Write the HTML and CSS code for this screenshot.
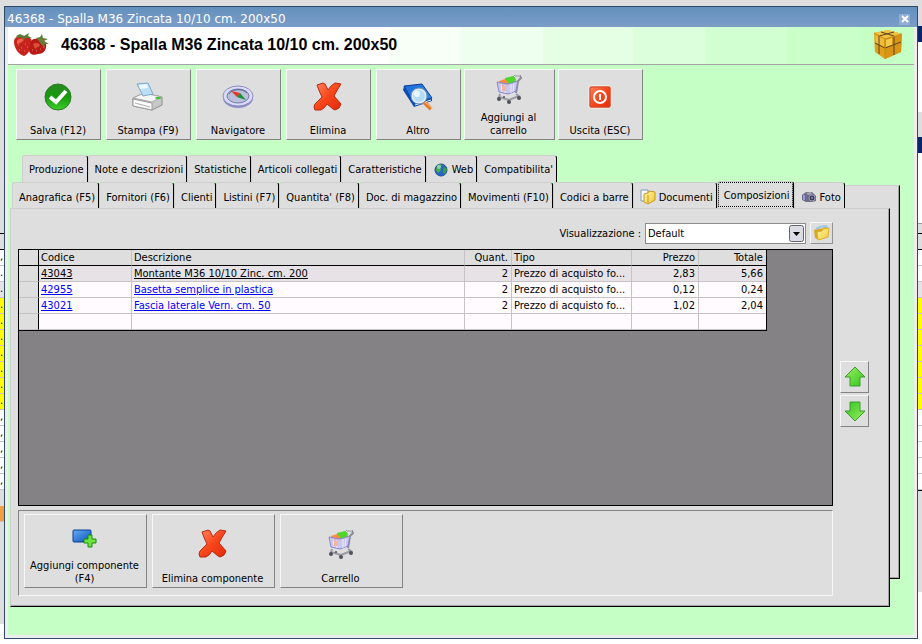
FILE: index.html
```html
<!DOCTYPE html>
<html lang="it">
<head>
    <meta charset="UTF-8">
    <meta name="viewport" content="width=device-width, initial-scale=1.0">
    <title>46368 - Spalla M36 Zincata 10/10 cm. 200x50</title>
    <link rel="stylesheet" href="styles.css">
</head>
<body>
    <!-- shared icons -->
    <svg class="sprite" aria-hidden="true">
        <defs>
            <linearGradient id="gGreen" x1="0" y1="0" x2="0" y2="1"><stop offset="0" stop-color="#2a8a22"/><stop offset="0.5" stop-color="#159a0c"/><stop offset="1" stop-color="#3fce2c"/></linearGradient>
            <linearGradient id="gRed" x1="0" y1="0" x2="1" y2="1"><stop offset="0" stop-color="#ff8a62"/><stop offset="0.5" stop-color="#f8461c"/><stop offset="1" stop-color="#e02a0c"/></linearGradient>
            <linearGradient id="gBlue" x1="0" y1="0" x2="1" y2="1"><stop offset="0" stop-color="#63aef5"/><stop offset="1" stop-color="#0a50b8"/></linearGradient>
            <linearGradient id="gBook" x1="0" y1="0" x2="1" y2="1"><stop offset="0" stop-color="#1c6cd8"/><stop offset="1" stop-color="#2c8cf0"/></linearGradient>
            <linearGradient id="gArrow" x1="0" y1="0" x2="1" y2="1"><stop offset="0" stop-color="#9cf060"/><stop offset="1" stop-color="#2fc41e"/></linearGradient>
            <linearGradient id="gFolder" x1="0" y1="0" x2="1" y2="1"><stop offset="0" stop-color="#fff6a0"/><stop offset="1" stop-color="#f0c83c"/></linearGradient>
        </defs>
        <symbol id="cross" viewBox="0 0 30 30">
            <path d="M4 3 10 1 12 2 15 8Q18 3 22 1L28 2Q24 8 21 14L28 22Q27 27 22 28L20 27 14 22Q12 26 8 28L2 28Q0 25 2 22L9 15Q6 9 4 3Z" fill="url(#gRed)" stroke="#b82810" stroke-linejoin="round"/>
        </symbol>
        <symbol id="cart" viewBox="0 0 26 30">
            <path d="M17 4 19 2H24L25 4 22 7 20 19" fill="none" stroke="#8c8c98" stroke-width="2"/>
            <path d="M17 4 19 2H24" fill="none" stroke="#e8e8ee" stroke-width="1"/>
            <path d="M9 4 17 2 20 5 19 10H9Z" fill="#50d62a"/>
            <path d="M3 7 9 5 12 8 11 12H4Z" fill="#ff8a42"/>
            <path d="M1 8 12 10 22 7 20 17 12 20 3 18Z" fill="#c4c0f0" fill-opacity="0.800" stroke="#8a86cc"/>
            <path d="M5 10 6 18M9 11V19M15 10V19M18 9 17 18" stroke="#eceafc" fill="none"/>
            <path d="M6 12H10V17H6Z" fill="#f4b4a0"/>
            <path d="M4 20 3 23 13 26 23 22 20 20" fill="none" stroke="#9a9aa4" stroke-width="2"/>
            <circle cx="3" cy="25" r="2" fill="#505058"/><circle cx="13" cy="28" r="2" fill="#505058"/><circle cx="23" cy="24" r="2" fill="#505058"/><circle cx="8" cy="23" r="1" fill="#505058"/>
        </symbol>
        <symbol id="arrow" viewBox="0 0 22 22">
            <path d="M11 1 21 11H16V20H6V11H1Z" fill="url(#gArrow)" stroke="#3a9c30" stroke-linejoin="round"/>
        </symbol>
        <symbol id="folder" viewBox="0 0 17 16">
            <path d="M1 5 6 3 8 4 13 1 15 2V12L6 15 2 13Z" fill="#d8a820"/>
            <path d="M3 4 7 2 13 1 14 3" fill="none" stroke="#9cc8e8" stroke-width="2"/>
            <path d="M4 7 9 6 10 4 16 3 15 12 5 15Z" fill="url(#gFolder)" stroke="#dcb030"/>
        </symbol>
    </svg>

    <aside class="behind behind-left" aria-hidden="true">
        <div class="b-panel"></div>
        <div class="b-head"></div>
        <div class="b-row">,</div>
        <div class="b-row">.</div>
        <div class="b-row current">.</div>
        <div class="b-row yellow">.</div>
        <div class="b-row yellow">.</div>
        <div class="b-row yellow">.</div>
        <div class="b-row yellow">.</div>
        <div class="b-row yellow">.</div>
        <div class="b-row yellow">.</div>
        <div class="b-row yellow">.</div>
        <div class="b-row">,</div>
        <div class="b-row">,</div>
        <div class="b-row">,</div>
        <div class="b-row">,</div>
        <div class="b-row">,</div>
        <div class="b-gap"></div>
        <div class="b-row orange"></div>
        <div class="b-foot"></div>
    </aside>

    <main class="window">
        <header class="titlebar">
            <span>46368 - Spalla M36 Zincata 10/10 cm. 200x50</span>
            <button class="close" type="button" aria-label="Chiudi">
                <svg width="8" height="8" viewBox="0 0 8 8"><path d="M1 1 7 7M7 1 1 7" stroke="#fff" stroke-width="2"/></svg>
            </button>
        </header>

        <div class="client">
            <div class="banner">
                <svg class="berries" width="38" height="26" viewBox="0 0 38 26">
                    <path d="M2 10C2 4 8 3 13 4 19 4 21 9 19 14 18 19 15 23 12 24 7 23 2 16 2 10Z" fill="#c8231c"/>
                    <path d="M19 9C23 5 32 6 34 12 35 17 32 22 26 22 21 24 17 22 17 18Z" fill="#b81c18"/>
                    <path d="M5 9C7 6 11 6 12 8 10 10 7 12 5 12Z" fill="#f0604c"/>
                    <path d="M21 12C24 10 27 11 28 13L23 17Z" fill="#e04c3a"/>
                    <path d="M4 4 8 2 12 4 17 1 16 4 20 6 14 6 11 8 10 5 6 6Z" fill="#5c7c34"/>
                    <path d="M24 6 28 5 30 2 31 6 36 7 32 9 37 12 32 12 33 16 29 12 27 9Z" fill="#66803a"/>
                    <path d="M6 13h1M9 16h1M13 12h1M12 19h1M15 15h1M7 18h1M20 18h1M24 19h1M28 17h1M26 14h1M31 15h1" stroke="#e87c4c"/>
                </svg>
                <h1>46368 - Spalla M36 Zincata 10/10 cm. 200x50</h1>
                <svg class="box" width="32" height="32" viewBox="0 0 32 32">
                    <path d="M2 4 16 1 30 5 29 23 13 30 3 23Z" fill="#e0a01c"/>
                    <path d="M2 4 16 1 30 5 13 10Z" fill="#f2c244"/>
                    <path d="M13 10 30 5 29 23 13 30Z" fill="#d89414"/>
                    <path d="M3 6 12 10V18L4 14Z" fill="#f0bc3c"/>
                    <path d="M14 11 20 9V16L14 18Z" fill="#f4c848"/>
                    <path d="M9 3 22 7V26M22 3 7 7V25M3 14 13 19 29 13" fill="none" stroke="#5c4420" stroke-width="1"/>
                    <path d="M13 10V30M2 4 13 10 30 5" fill="none" stroke="#c48c1c"/>
                </svg>
            </div>

            <div class="toolbar">
                <button class="big" type="button">
                    <svg width="30" height="30" viewBox="0 0 30 30"><circle cx="15" cy="15" r="13" fill="url(#gGreen)" stroke="#2c7c24"/><path d="M7 15 13 20 23 9" fill="none" stroke="#fff" stroke-width="4"/></svg>
                    <span>Salva (F12)</span>
                </button>
                <button class="big" type="button">
                    <svg width="32" height="30" viewBox="0 0 32 30">
                        <path d="M1 16 12 11 30 15V23L20 28 1 24Z" fill="#c8c8c8" stroke="#8c8c8c"/>
                        <path d="M1 16 12 11 30 15 20 20Z" fill="#f6f6f6" stroke="#a8a8a8"/>
                        <path d="M1 17 20 21V28L1 24Z" fill="#fafafa" stroke="#9c9c9c"/>
                        <path d="M5 2 16 1 21 12 11 14Z" fill="#bcdff8" stroke="#7ca8cc"/>
                        <path d="M7 3 15 2 16 6 8 7Z" fill="#eef8ff"/>
                        <ellipse cx="26" cy="16" rx="3" ry="1" fill="#2cc41c"/>
                        <path d="M3 21 18 25" stroke="#b0b0b0"/>
                    </svg>
                    <span>Stampa (F9)</span>
                </button>
                <button class="big" type="button">
                    <svg width="32" height="30" viewBox="0 0 32 30">
                        <ellipse cx="16" cy="16" rx="15" ry="10" fill="#8c8cc4"/>
                        <ellipse cx="16" cy="14" rx="15" ry="10" fill="#dcdcf8" stroke="#8c8cc4"/>
                        <ellipse cx="16" cy="14" rx="11" ry="7" fill="#b8c0dc" stroke="#7478ac"/>
                        <path d="M7 12C10 7 20 6 25 11" stroke="#5c6090" fill="none"/>
                        <path d="M9 9 18 11 15 15Z" fill="#e83420"/>
                        <path d="M18 11 24 18 15 15Z" fill="#189038"/>
                    </svg>
                    <span>Navigatore</span>
                </button>
                <button class="big" type="button">
                    <svg width="30" height="30"><use href="#cross"/></svg>
                    <span>Elimina</span>
                </button>
                <button class="big" type="button">
                    <svg width="32" height="30" viewBox="0 0 32 30">
                        <path d="M2 4 20 2 30 16 12 21Z" fill="url(#gBook)" stroke="#0c3c94"/>
                        <path d="M2 4 12 21 30 16V19L12 25 1 8Z" fill="#0c4cb0"/>
                        <path d="M13 23 29 18" stroke="#e8f0fc"/>
                        <path d="M22 20 29 27" stroke="#e87c28" stroke-width="4"/>
                        <path d="M22 19 30 26" stroke="#fcc48c" stroke-width="1"/>
                        <circle cx="17" cy="14" r="7" fill="#b4dcfa" stroke="#e4ecf4" stroke-width="2"/>
                        <circle cx="17" cy="14" r="8" fill="none" stroke="#6890b8"/>
                        <circle cx="15" cy="12" r="3" fill="#e8f6ff"/>
                    </svg>
                    <span>Altro</span>
                </button>
                <button class="big wide" type="button">
                    <svg width="26" height="30"><use href="#cart"/></svg>
                    <span>Aggiungi al carrello</span>
                </button>
                <button class="big" type="button">
                    <svg width="30" height="30" viewBox="0 0 30 30">
                        <rect x="4" y="4" width="22" height="22" rx="2" fill="url(#gRed)" stroke="#fff0ea"/>
                        <rect x="5" y="5" width="20" height="20" rx="1" fill="none" stroke="#c84828"/>
                        <circle cx="15" cy="15" r="6" fill="none" stroke="#fff" stroke-width="2"/>
                        <path d="M15 12V18" stroke="#fff" stroke-width="2"/>
                    </svg>
                    <span>Uscita (ESC)</span>
                </button>
            </div>

            <nav class="tabs tabs-back">
                <a class="tab" href="#">Produzione</a>
                <a class="tab" href="#">Note e descrizioni</a>
                <a class="tab" href="#">Statistiche</a>
                <a class="tab" href="#">Articoli collegati</a>
                <a class="tab" href="#">Caratteristiche</a>
                <a class="tab" href="#">
                    <svg width="16" height="16" viewBox="0 0 16 16"><circle cx="8" cy="8" r="6" fill="#2468c8" stroke="#1c4c94"/><path d="M4 4 7 2 9 3 7 6 8 8 5 11 3 8Z" fill="#4cb03c"/><path d="M11 5 14 7 12 12 10 10Z" fill="#3ca43c"/><circle cx="6" cy="5" r="2" fill="#c8f0e0" fill-opacity="0.600"/></svg>
                    Web
                </a>
                <a class="tab" href="#">Compatibilita'</a>
            </nav>

            <div class="sheets">
                <div class="sheet-behind"></div>
                <div class="sheet-front">
                    <nav class="tabs">
                        <a class="tab" href="#">Anagrafica (F5)</a>
                        <a class="tab" href="#">Fornitori (F6)</a>
                        <a class="tab" href="#">Clienti</a>
                        <a class="tab" href="#">Listini (F7)</a>
                        <a class="tab" href="#">Quantita' (F8)</a>
                        <a class="tab" href="#">Doc. di magazzino</a>
                        <a class="tab" href="#">Movimenti (F10)</a>
                        <a class="tab" href="#">Codici a barre</a>
                        <a class="tab" href="#">
                            <svg width="16" height="16" viewBox="0 0 16 16"><path d="M1 1H8V12H1Z" fill="#f4f8fc" stroke="#7c9cb8"/><path d="M4 5 8 4 9 2 15 3V11L8 15 4 13Z" fill="url(#gFolder)" stroke="#c8981c"/><path d="M8 6V14" stroke="#c8981c"/></svg>
                            Documenti
                        </a>
                        <a class="tab selected" href="#">Composizioni</a>
                        <a class="tab" href="#">
                            <svg width="16" height="16" viewBox="0 0 16 16"><path d="M1 6 5 3 11 3 15 7V12L11 13 5 13 1 11Z" fill="#6c6c88"/><path d="M5 4 10 3 11 5 7 6Z" fill="#a8a8b8"/><circle cx="11" cy="9" r="3" fill="#3c3c54" stroke="#9c9cb8"/><circle cx="11" cy="9" r="1" fill="#7c94d8"/><path d="M3 6V11" stroke="#9c94dc" stroke-width="2"/></svg>
                            Foto
                        </a>
                    </nav>

                    <section class="page">
                        <div class="content">
                            <div class="view-row">
                                <label for="view">Visualizzazione :</label>
                                <div class="combo">
                                    <select id="view"><option>Default</option></select>
                                    <svg width="15" height="17" viewBox="0 0 15 17"><rect x="0.500" y="0.500" width="14" height="16" rx="2" fill="#dcdce4" stroke="#64646c"/><path d="M4 7H11L7.500 11Z" fill="#000"/></svg>
                                </div>
                                <button class="small" type="button" aria-label="Apri visualizzazione"><svg width="17" height="16"><use href="#folder"/></svg></button>
                            </div>

                            <div class="grid-box">
                                <table>
                                    <colgroup>
                                        <col class="c-sel"><col class="c-code"><col><col class="c-qty"><col class="c-type"><col class="c-price"><col class="c-total">
                                    </colgroup>
                                    <thead>
                                        <tr><th></th><th>Codice</th><th>Descrizione</th><th class="num">Quant.</th><th>Tipo</th><th class="num">Prezzo</th><th class="num">Totale</th></tr>
                                    </thead>
                                    <tbody>
                                        <tr class="current"><th></th><td><a href="#">43043</a></td><td><a href="#">Montante M36 10/10 Zinc. cm. 200</a></td><td class="num">2</td><td>Prezzo di acquisto fo...</td><td class="num">2,83</td><td class="num">5,66</td></tr>
                                        <tr><th></th><td><a href="#">42955</a></td><td><a href="#">Basetta semplice in plastica</a></td><td class="num">2</td><td>Prezzo di acquisto fo...</td><td class="num">0,12</td><td class="num">0,24</td></tr>
                                        <tr><th></th><td><a href="#">43021</a></td><td><a href="#">Fascia laterale Vern. cm. 50</a></td><td class="num">2</td><td>Prezzo di acquisto fo...</td><td class="num">1,02</td><td class="num">2,04</td></tr>
                                        <tr><th></th><td></td><td></td><td></td><td></td><td></td><td></td></tr>
                                    </tbody>
                                </table>
                            </div>

                            <div class="actions">
                                <button class="big" type="button">
                                    <svg width="26" height="20" viewBox="0 0 26 20"><rect x="1" y="1" width="18" height="12" rx="1" fill="url(#gBlue)" stroke="#0c3c94"/><path d="M16 6H20V10H24V14H20V18H16V14H12V10H16Z" fill="#6ce43c" stroke="#188c14"/></svg>
                                    <span>Aggiungi componente (F4)</span>
                                </button>
                                <button class="big" type="button">
                                    <svg width="30" height="30"><use href="#cross"/></svg>
                                    <span>Elimina componente</span>
                                </button>
                                <button class="big" type="button">
                                    <svg width="26" height="30"><use href="#cart"/></svg>
                                    <span>Carrello</span>
                                </button>
                            </div>
                        </div>

                        <div class="movers">
                            <button type="button" aria-label="Sposta su"><svg width="22" height="22"><use href="#arrow"/></svg></button>
                            <button type="button" aria-label="Sposta giù"><svg class="down" width="22" height="22"><use href="#arrow"/></svg></button>
                        </div>
                    </section>
                </div>
            </div>
        </div>
    </main>

    <aside class="behind behind-right" aria-hidden="true">
        <div class="b-top"></div>
        <div class="b-row navy"></div>
        <div class="b-list"></div>
        <div class="b-bar"></div>
        <div class="b-row navy"></div>
        <div class="b-list"></div>
        <div class="b-line"></div>
        <div class="b-head"></div>
        <div class="b-row"></div>
        <div class="b-row"></div>
        <div class="b-row current"></div>
        <div class="b-row yellow"></div>
        <div class="b-row yellow"></div>
        <div class="b-row yellow"></div>
        <div class="b-row yellow"></div>
        <div class="b-row yellow"></div>
        <div class="b-row yellow"></div>
        <div class="b-row yellow"></div>
        <div class="b-row"></div>
        <div class="b-row"></div>
        <div class="b-row"></div>
        <div class="b-row"></div>
        <div class="b-row"></div>
        <div class="b-foot"></div>
    </aside>
</body>
</html>
```
FILE: styles.css
```css
* {
    box-sizing: border-box;
}
body {
    display: grid;
    grid-template-columns: 4px 1fr 4px;
    min-height: 100vh;
    margin: 0;
    background-color: #dedede;
    border-bottom: 5px solid #ffffff;
    font-family: "DejaVu Sans Condensed", "DejaVu Sans", sans-serif;
    font-size: 11px;
    line-height: 13px;
    color: #000000;
}
button, select {
    font: inherit;
    color: inherit;
}
svg {
    display: block;
    flex: none;
}
.sprite {
    position: absolute;
    width: 0;
    height: 0;
}

/* application behind the dialog */
.behind {
    display: flex;
    flex-direction: column;
    background-color: #ffffff;
}
.b-panel {
    height: 233px;
    background-color: #dedede;
}
.b-top {
    height: 26px;
    background-color: #dedede;
}
.b-head {
    height: 17px;
    background-color: #dedede;
    border-top: 1px solid #000000;
    border-bottom: 1px solid #000000;
}
.b-row {
    height: 16px;
    border-bottom: 1px solid #c6c3c6;
}
.b-row.current {
    background-color: #e6e2e6;
}
.b-row.yellow {
    background-color: #ffff00;
}
.b-row.navy {
    background-color: #08246b;
    border-bottom: 0;
}
.b-row.orange {
    background-color: #f0a040;
}
.b-list {
    height: 70px;
}
.b-bar {
    height: 25px;
    background-color: #dedede;
}
.b-line {
    height: 10px;
    background-color: #dedede;
    border-top: 1px solid #9c9a9c;
}
.b-gap {
    height: 16px;
    background-color: #dedede;
}
.b-foot {
    height: 102px;
    background-color: #dedede;
}
.behind-right .b-foot {
    border-top: 1px solid #000000;
}

/* dialog window */
.window {
    display: flex;
    flex-direction: column;
    margin-top: 6px;
    border: 1px solid #31496b;
    background-color: #ededed;
}
.titlebar {
    display: flex;
    align-items: center;
    justify-content: space-between;
    height: 20px;
    padding: 4px 7px 0 2px;
    background: linear-gradient(#6490bd, #7b9dc8);
    color: #ffffff;
    font-family: "DejaVu Sans", sans-serif;
    font-size: 12px;
}
.close {
    display: grid;
    place-items: center;
    width: 11px;
    height: 11px;
    padding: 0;
    border: 0;
    background-color: #8fafd2;
}
.client {
    display: flex;
    flex: 1;
    flex-direction: column;
    margin: 0 3px 3px;
    padding-bottom: 28px;
    background-color: #c5ffc5;
}
.banner {
    display: flex;
    align-items: center;
    height: 38px;
    padding: 0 10px 2px 4px;
    border-bottom: 1px solid #a5a5a5;
    background: linear-gradient(90deg, #ffffff 42%, #f7fff7 42% 50%, #efffef 50% 59%, #e4ffe4 59% 69%, #dcffdc 69% 77%, #d2ffd2 77% 86%, #caffca 86% 94%, #c5ffc5 94%);
}
.banner h1 {
    flex: 1;
    margin: 0 0 0 11px;
    font-family: "Liberation Sans", Arial, sans-serif;
    font-size: 16px;
    line-height: 20px;
}
.toolbar {
    display: flex;
    gap: 5px;
    padding: 4px 8px 15px;
}
.big {
    display: flex;
    flex-direction: column;
    align-items: center;
    justify-content: space-between;
    width: 85px;
    height: 71px;
    padding: 12px 6px 2px 5px;
    border: 1px solid #f7f7f7;
    border-right-color: #848284;
    border-bottom-color: #848284;
    background-color: #dedede;
}
.big.wide {
    width: 91px;
    margin: 0 -2px;
    padding: 4px 13px 2px 11px;
}

/* tabs */
.tabs {
    display: flex;
    align-items: flex-end;
    padding-left: 2px;
}
.tabs-back {
    padding-left: 14px;
}
.tab {
    display: flex;
    align-items: center;
    gap: 3px;
    height: 26px;
    padding: 3px 3px 0 6px;
    border-top: 1px solid #cecece;
    border-left: 1px solid #cecece;
    border-right: 1px solid #000000;
    border-radius: 3px 3px 0 0;
    background-color: #dedede;
    color: #000000;
    text-decoration: none;
    white-space: nowrap;
}
.tabs-back .tab {
    height: 27px;
    padding-top: 1px;
}
.tab.selected {
    height: 27px;
    padding-top: 1px;
    outline: 1px dotted #000000;
    outline-offset: -2px;
}
.sheets {
    display: grid;
    flex: 1;
    margin: -1px 14px 0 2px;
}
.sheet-behind {
    grid-area: 1 / 1;
    margin: 4px 0 28px 40px;
    border-top: 1px solid #cecece;
    border-right: 1px solid #000000;
    border-bottom: 1px solid #000000;
    background-color: #dedede;
    box-shadow: inset -1px -1px #a5a2a5;
}
.sheet-front {
    display: flex;
    grid-area: 1 / 1;
    flex-direction: column;
    margin-right: 10px;
}
.page {
    display: flex;
    flex: 1;
    padding: 13px 20px 10px 7px;
    border: 1px solid #cecece;
    border-right-color: #000000;
    border-bottom-color: #000000;
    background-color: #dedede;
    box-shadow: inset -1px -1px #a5a2a5;
}

/* composition page */
.content {
    display: flex;
    flex: 1;
    flex-direction: column;
}
.view-row {
    display: flex;
    align-items: center;
    justify-content: flex-end;
    gap: 4px;
}
.combo {
    display: grid;
    align-items: center;
    width: 161px;
}
.combo select {
    grid-area: 1 / 1;
    width: 100%;
    height: 21px;
    padding: 0 2px;
    border: 1px solid #8c8c8c;
    border-radius: 0;
    background-color: #ffffff;
    appearance: none;
}
.combo svg {
    grid-area: 1 / 1;
    justify-self: end;
    margin-right: 2px;
    pointer-events: none;
}
.small {
    display: grid;
    place-items: center;
    width: 23px;
    height: 22px;
    padding: 0;
    border: 1px solid #f7f7f7;
    border-right-color: #949294;
    border-bottom-color: #949294;
    background-color: #dedede;
}
.grid-box {
    flex: 1;
    margin-top: 5px;
    border: 1px solid #000000;
    background-color: #848284;
}
table {
    width: 92%;
    border-right: 1px solid #000000;
    border-bottom: 1px solid #000000;
    border-spacing: 0;
    table-layout: fixed;
}
.c-sel {
    width: 20px;
}
.c-code {
    width: 93px;
}
.c-qty {
    width: 47px;
}
.c-type {
    width: 120px;
}
.c-price {
    width: 67px;
}
.c-total {
    width: 67px;
}
th, td {
    height: 16px;
    padding: 1px 2px 0;
    border-right: 1px solid #c6c3c6;
    border-bottom: 1px solid #c6c3c6;
    background-color: #fffbff;
    font-weight: normal;
    line-height: 14px;
    text-align: left;
    white-space: nowrap;
}
th {
    background-color: #dedede;
}
thead th {
    border-bottom-color: #000000;
}
th:first-child {
    border-right-color: #000000;
}
td:last-child, th:last-child {
    border-right: 0;
}
.num {
    padding-right: 3px;
    text-align: right;
}
td a {
    color: #0000ff;
}
tr.current td {
    background-color: #e6e2e6;
}
tr.current a {
    color: #000000;
}
.actions {
    display: flex;
    gap: 5px;
    margin-top: 4px;
    padding: 3px 4px 7px 5px;
    border: 1px solid #f7f7f7;
    border-top-color: #848284;
    border-left-color: #848284;
}
.actions .big {
    width: 123px;
    height: 74px;
    padding: 14px 3px 2px 1px;
}
.movers {
    display: flex;
    flex-direction: column;
    gap: 2px;
    margin: 139px 0 0 7px;
}
.movers button {
    display: grid;
    place-items: center;
    width: 29px;
    height: 32px;
    padding: 0;
    border: 1px solid #f7f7f7;
    border-right-color: #848284;
    border-bottom-color: #848284;
    background-color: #dedede;
}
.down {
    transform: rotate(180deg);
}
```
